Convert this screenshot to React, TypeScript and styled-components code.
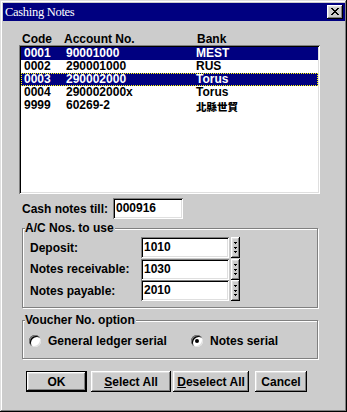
import React from "react";
import styled, { createGlobalStyle, css } from "styled-components";

const GRAY = "#cccccc";
const NAVY = "#000080";

const Global = createGlobalStyle`
  html, body { margin: 0; padding: 0; background: ${GRAY}; }
  body { font-family: "Liberation Sans", Arial, sans-serif; font-size: 12px; font-weight: bold; color: #000; }
  * { box-sizing: border-box; }
`;

const raised = css`
  background: ${GRAY};
  box-shadow: inset -1px -1px #000, inset 1px 1px #fff, inset -2px -2px #808080, inset 2px 2px #dfdfdf;
`;

const sunken = css`
  background: #fff;
  box-shadow: inset 1px 1px #808080, inset -1px -1px #fff, inset 2px 2px #000, inset -2px -2px #dfdfdf;
`;

const Window = styled.div`
  width: 347px;
  height: 412px;
  background: ${GRAY};
  padding: 3px;
  box-shadow: inset -1px -1px #000, inset 1px 1px #dfdfdf, inset -2px -2px #808080, inset 2px 2px #fff;
  display: flex;
  flex-direction: column;
`;

const TitleBar = styled.div`
  height: 18px;
  margin-right: -1px;
  background: ${NAVY};
  display: flex;
  align-items: center;
  justify-content: space-between;
  padding: 0 2px 0 2px;
`;

const Title = styled.span`
  font-family: "Liberation Serif", "Times New Roman", serif;
  font-weight: normal;
  font-size: 12.5px;
  letter-spacing: -0.3px;
  color: #fff;
  line-height: 18px;
`;

const CloseBtn = styled.div`
  ${raised};
  width: 16px;
  height: 14px;
  display: flex;
  align-items: center;
  justify-content: center;
  padding-bottom: 1px;
`;

const HeaderRow = styled.div`
  margin-top: 12px;
  height: 12px;
  line-height: 12px;
  padding-left: 19px;
  display: flex;
`;

const Col = styled.span<{ $w?: number }>`
  display: inline-block;
  white-space: nowrap;
  ${(p) => (p.$w ? `width: ${p.$w}px;` : "")}
`;

const ListBox = styled.div`
  ${sunken};
  margin-left: 16px;
  width: 301px;
  height: 149px;
  padding: 2px;
`;

const ListRow = styled.div<{ $sel?: boolean; $focus?: boolean }>`
  height: 13px;
  line-height: 13px;
  display: flex;
  padding-left: 3px;
  color: ${(p) => (p.$sel ? "#fff" : "#000")};
  background: ${(p) => (p.$sel ? NAVY : "transparent")};
  ${(p) => (p.$focus ? "outline: 1px dotted #ffff00; outline-offset: -1px;" : "")}
`;

const Cjk = styled.span`
  display: inline-block;
  height: 13px;
  padding-top: 2px;
  line-height: 11px;
  vertical-align: top;
  font-family: "Noto Sans CJK TC", "Noto Sans CJK SC", sans-serif;
  font-size: 10.5px;
  font-weight: 900;
`;

const CashRow = styled.div`
  margin-top: 4px;
  padding-left: 19px;
  height: 21px;
  display: flex;
  align-items: center;
`;

const Label = styled.span<{ $w: number }>`
  width: ${(p) => p.$w}px;
  white-space: nowrap;
`;

const TextBox = styled.div<{ $w: number }>`
  ${sunken};
  width: ${(p) => p.$w}px;
  height: 21px;
  line-height: 20px;
  padding-left: 3px;
`;

const Group = styled.div<{ $top: number; $h: number }>`
  position: relative;
  margin-top: ${(p) => p.$top}px;
  margin-left: 19px;
  width: 296px;
  height: ${(p) => p.$h}px;
  border: 1px solid #808080;
  box-shadow: inset 1px 1px #fff, 1px 1px #fff;
`;

const GroupLabel = styled.span`
  position: absolute;
  top: -7px;
  left: 2px;
  background: ${GRAY};
  padding: 0 1px 0 0;
  line-height: 13px;
  white-space: nowrap;
`;

const FieldList = styled.div`
  padding: 8px 0 0 7px;
  display: flex;
  flex-direction: column;
  gap: 0.5px;
`;

const FieldRow = styled.div`
  height: 21px;
  display: flex;
  align-items: center;
`;

const Spinner = styled.div`
  ${raised};
  width: 9px;
  height: 21px;
  margin-left: 2px;
  display: flex;
  align-items: center;
  justify-content: center;
`;

const RadioRow = styled.div`
  padding: 13px 0 0 6px;
  display: flex;
  align-items: center;
  height: 26px;
`;

const RadioItem = styled.label<{ $w?: number }>`
  display: flex;
  align-items: center;
  gap: 7px;
  ${(p) => (p.$w ? `width: ${p.$w}px;` : "")}
`;

const RadioCircle = styled.span<{ $on?: boolean }>`
  width: 12px;
  height: 12px;
  border-radius: 50%;
  background: #fff;
  box-shadow: inset 1px 1px #808080, inset -1px -1px #dfdfdf, inset 2px 2px #000;
  display: flex;
  align-items: center;
  justify-content: center;
  &::after {
    content: "";
    width: 4px;
    height: 4px;
    border-radius: 50%;
    background: ${(p) => (p.$on ? "#000" : "transparent")};
  }
`;

const ButtonRow = styled.div`
  margin-top: 12px;
  padding-left: 23px;
  display: flex;
  height: 21px;
`;

const Button = styled.div<{ $w: number; $ml?: number; $default?: boolean }>`
  width: ${(p) => p.$w}px;
  height: 21px;
  margin-left: ${(p) => p.$ml ?? 0}px;
  display: flex;
  align-items: center;
  justify-content: center;
  background: ${GRAY};
  ${(p) =>
    p.$default
      ? `box-shadow: inset 0 0 0 1px #000, inset -2px -2px #000, inset 2px 2px #fff, inset -3px -3px #808080, inset 3px 3px #dfdfdf;`
      : `box-shadow: inset -1px -1px #000, inset 1px 1px #fff, inset -2px -2px #808080, inset 2px 2px #dfdfdf;`}
  u { text-decoration: underline; text-underline-offset: 1px; }
`;

const rows = [
  { code: "0001", acc: "90001000", bank: "MEST", sel: true },
  { code: "0002", acc: "290001000", bank: "RUS" },
  { code: "0003", acc: "290002000", bank: "Torus", sel: true, focus: true },
  { code: "0004", acc: "290002000x", bank: "Torus" },
  { code: "9999", acc: "60269-2", bank: "北縣世貿", cjk: true },
];

const fields = [
  { label: "Deposit:", value: "1010" },
  { label: "Notes receivable:", value: "1030" },
  { label: "Notes payable:", value: "2010" },
];

const SpinArrows = () => (
  <svg width="5" height="15" viewBox="0 0 5 15" shapeRendering="crispEdges">
    <rect x="1" y="2" width="3" height="1" fill="#000" />
    <rect x="2" y="3" width="1" height="1" fill="#000" />
    <rect x="1" y="7" width="3" height="1" fill="#000" />
    <rect x="2" y="8" width="1" height="1" fill="#000" />
    <rect x="1" y="11" width="3" height="1" fill="#000" />
    <rect x="2" y="12" width="1" height="1" fill="#000" />
  </svg>
);

const CloseX = () => (
  <svg width="8" height="7" viewBox="0 0 8 7" shapeRendering="crispEdges">
    <path d="M0 0h2v1h-2zM6 0h2v1h-2zM1 1h2v1h-2zM5 1h2v1h-2zM2 2h4v1h-4zM3 3h2v1h-2zM2 4h4v1h-4zM1 5h2v1h-2zM5 5h2v1h-2zM0 6h2v1h-2zM6 6h2v1h-2z" fill="#000" />
  </svg>
);

export default function App() {
  return (
    <>
      <Global />
      <Window>
        <TitleBar>
          <Title>Cashing Notes</Title>
          <CloseBtn>
            <CloseX />
          </CloseBtn>
        </TitleBar>

        <HeaderRow>
          <Col $w={42}>Code</Col>
          <Col $w={133}>Account No.</Col>
          <Col>Bank</Col>
        </HeaderRow>

        <ListBox>
          {rows.map((r) => (
            <ListRow key={r.code} $sel={r.sel} $focus={r.focus}>
              <Col $w={42}>{r.code}</Col>
              <Col $w={130}>{r.acc}</Col>
              <Col>{r.cjk ? <Cjk>{r.bank}</Cjk> : r.bank}</Col>
            </ListRow>
          ))}
        </ListBox>

        <CashRow>
          <Label $w={91}>Cash notes till:</Label>
          <TextBox $w={70}>000916</TextBox>
        </CashRow>

        <Group $top={9} $h={80}>
          <GroupLabel>A/C Nos. to use</GroupLabel>
          <FieldList>
            {fields.map((f) => (
              <FieldRow key={f.label}>
                <Label $w={111}>{f.label}</Label>
                <TextBox $w={88}>{f.value}</TextBox>
                <Spinner>
                  <SpinArrows />
                </Spinner>
              </FieldRow>
            ))}
          </FieldList>
        </Group>

        <Group $top={12} $h={39}>
          <GroupLabel>Voucher No. option</GroupLabel>
          <RadioRow>
            <RadioItem $w={162}>
              <RadioCircle />
              General ledger serial
            </RadioItem>
            <RadioItem>
              <RadioCircle $on />
              Notes serial
            </RadioItem>
          </RadioRow>
        </Group>

        <ButtonRow>
          <Button $w={61} $default>OK</Button>
          <Button $w={80} $ml={4}>
            <span><u>S</u>elect All</span>
          </Button>
          <Button $w={76} $ml={2}>
            <span><u>D</u>eselect All</span>
          </Button>
          <Button $w={52} $ml={6}>Cancel</Button>
        </ButtonRow>
      </Window>
    </>
  );
}
